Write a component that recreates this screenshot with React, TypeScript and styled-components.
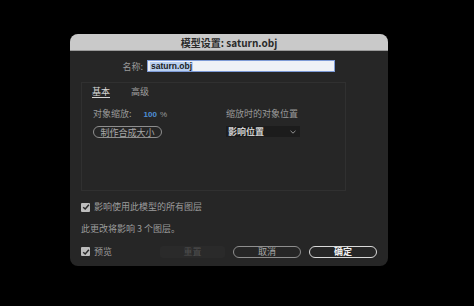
import React from "react";
import styled, { createGlobalStyle } from "styled-components";

const Global = createGlobalStyle`
  html, body { margin: 0; padding: 0; background: #000; }
  body { width: 474px; height: 306px; overflow: hidden; font-family: "Noto Sans CJK SC", "Noto Sans", sans-serif; }
`;

const Dialog = styled.div`
  margin: 34px 0 0 70px;
  width: 318px;
  height: 232px;
  border-radius: 8px;
  background: #262626;
  overflow: hidden;
  display: flex;
  flex-direction: column;
`;

const TitleBar = styled.div`
  height: 16px;
  background: #c9c9c9;
  display: flex;
  align-items: center;
  justify-content: center;
  font-size: 10px;
  font-weight: 700;
  color: #2a2a2a;
  border-bottom: 1px solid #9a9a9a;
`;

const Body = styled.div`
  flex: 1;
  padding: 9px 11px 0 11px;
  display: flex;
  flex-direction: column;
`;

const NameRow = styled.div`
  display: flex;
  align-items: center;
  gap: 4px;
  height: 12px;
`;

const NameLabel = styled.span`
  width: 62px;
  text-align: right;
  font-size: 9px;
  color: #9a9a9a;
`;

const NameInput = styled.div`
  width: 184px;
  height: 10px;
  background: #eef1f6;
  border: 1px solid #7d9ad6;
  display: flex;
  align-items: center;
  padding-left: 2px;
`;

const Selected = styled.span`
  background: #b8cff0;
  color: #1c1c1c;
  font-family: "Liberation Sans", sans-serif;
  font-weight: 700;
  font-size: 8.5px;
  line-height: 9px;
  padding: 0 1px;
`;

const Panel = styled.div`
  margin-top: 10px;
  width: 253px;
  height: 104px;
  border: 1px solid #303030;
  padding: 3px 0 0 10px;
  display: flex;
  flex-direction: column;
`;

const Tabs = styled.div`
  display: flex;
  gap: 21px;
  height: 13px;
`;

const Tab = styled.span<{ $active?: boolean }>`
  font-size: 9px;
  line-height: 11px;
  color: ${(p) => (p.$active ? "#d6d6d6" : "#a0a0a0")};
  border-bottom: ${(p) => (p.$active ? "1px solid #d6d6d6" : "1px solid transparent")};
  height: 11px;
`;

const Columns = styled.div`
  margin-top: 9px;
  display: grid;
  grid-template-columns: 133px 1fr;
  row-gap: 5px;
  padding-left: 1px;
`;

const Label = styled.span`
  font-size: 9px;
  line-height: 12px;
  color: #9a9a9a;
`;

const Blue = styled.span`
  color: #4f8fd6;
  font-family: "Liberation Sans", sans-serif;
  font-weight: 700;
  font-size: 8px;
  margin-left: 12px;
`;

const Pct = styled.span`
  font-family: "Liberation Sans", sans-serif;
  font-size: 8px;
  color: #9a9a9a;
  margin-left: 3px;
`;

const PillButton = styled.div<{ $primary?: boolean; $w: number }>`
  flex-shrink: 0;
  width: ${(p) => p.$w}px;
  height: 10px;
  border: ${(p) => (p.$primary ? "1.5px solid #d9d9d9" : "1px solid #8e8e8e")};
  border-radius: 7px;
  display: flex;
  align-items: center;
  justify-content: center;
  font-size: 9px;
  font-weight: ${(p) => (p.$primary ? 700 : 400)};
  color: ${(p) => (p.$primary ? "#f0f0f0" : "#a8a8a8")};
`;

const Select = styled.div`
  width: 74px;
  height: 11px;
  background: #1c1c1c;
  display: flex;
  align-items: center;
  justify-content: space-between;
  padding: 0 4px 0 2px;
  box-sizing: border-box;
  font-size: 9px;
  font-weight: 700;
  color: #cfcfcf;
`;

const CheckRow = styled.div<{ $mt: number }>`
  margin-top: ${(p) => p.$mt}px;
  display: flex;
  align-items: center;
  gap: 4px;
  font-size: 9px;
  line-height: 12px;
  color: #9c9c9c;
`;

const Box = styled.span`
  width: 9px;
  height: 9px;
  background: #bdbdbd;
  border-radius: 1px;
  display: flex;
  align-items: center;
  justify-content: center;
`;

const Info = styled.div`
  margin-top: 10px;
  font-size: 9px;
  line-height: 12px;
  color: #9c9c9c;
`;

const Footer = styled.div`
  margin-top: 10px;
  display: flex;
  align-items: center;
`;

const PreviewCheck = styled.div`
  display: flex;
  align-items: center;
  gap: 4px;
  font-size: 9px;
  color: #9c9c9c;
  width: 79px;
  flex-shrink: 0;
`;

const ResetButton = styled.div`
  flex-shrink: 0;
  width: 65px;
  height: 12px;
  background: #2a2a2a;
  border-radius: 3px;
  display: flex;
  align-items: center;
  justify-content: center;
  font-size: 9px;
  color: #4e4e4e;
  margin-right: 8px;
`;

const Spacer = styled.div`
  width: 8px;
  flex-shrink: 0;
`;

const Check = () => (
  <svg width="8" height="8" viewBox="0 0 8 8">
    <path d="M1.2 4.2 L3.2 6 L6.9 1.8" fill="none" stroke="#2a2a2a" strokeWidth="1.5" />
  </svg>
);

const Chevron = () => (
  <svg width="6" height="4" viewBox="0 0 6 4">
    <path d="M0.5 0.8 L3 3.2 L5.5 0.8" fill="none" stroke="#a0a0a0" strokeWidth="0.9" />
  </svg>
);

export default function App() {
  return (
    <>
      <Global />
      <Dialog>
        <TitleBar>模型设置: saturn.obj</TitleBar>
        <Body>
          <NameRow>
            <NameLabel>名称:</NameLabel>
            <NameInput>
              <Selected>saturn.obj</Selected>
            </NameInput>
          </NameRow>
          <Panel>
            <Tabs>
              <Tab $active>基本</Tab>
              <Tab>高级</Tab>
            </Tabs>
            <Columns>
              <Label>
                对象缩放:<Blue>100</Blue>
                <Pct>%</Pct>
              </Label>
              <Label>缩放时的对象位置</Label>
              <PillButton $w={67}>制作合成大小</PillButton>
              <Select>
                影响位置
                <Chevron />
              </Select>
            </Columns>
          </Panel>
          <CheckRow $mt={10}>
            <Box>
              <Check />
            </Box>
            影响使用此模型的所有图层
          </CheckRow>
          <Info>此更改将影响 3 个图层。</Info>
          <Footer>
            <PreviewCheck>
              <Box>
                <Check />
              </Box>
              预览
            </PreviewCheck>
            <ResetButton>重置</ResetButton>
            <PillButton $w={66}>取消</PillButton>
            <Spacer />
            <PillButton $w={66} $primary>
              确定
            </PillButton>
          </Footer>
        </Body>
      </Dialog>
    </>
  );
}
